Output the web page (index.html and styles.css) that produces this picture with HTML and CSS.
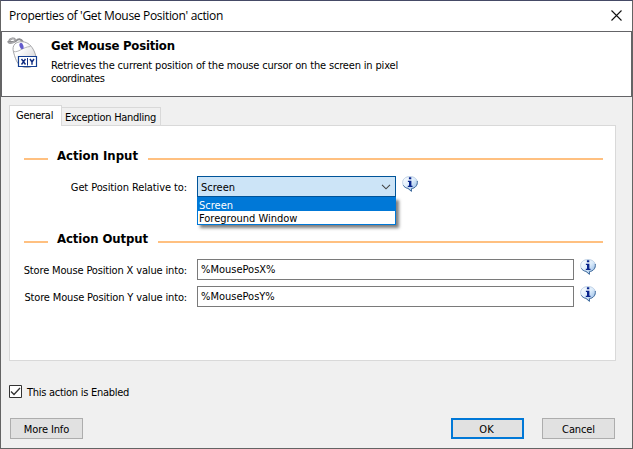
FILE: index.html
```html
<!DOCTYPE html>
<html lang="en">
<head>
<meta charset="utf-8">
<title>Properties of 'Get Mouse Position' action</title>
<link rel="stylesheet" href="styles.css">
</head>
<body>
<svg width="0" height="0" class="defs" aria-hidden="true">
  <defs>
    <linearGradient id="bubble" x1="0" y1="0" x2="1" y2="1">
      <stop offset="0" stop-color="#ffffff"/><stop offset=".5" stop-color="#dcecfb"/><stop offset="1" stop-color="#7fabdf"/>
    </linearGradient>
    <linearGradient id="shell" x1="0" y1="0" x2="1" y2="1">
      <stop offset=".3" stop-color="#ffffff"/><stop offset="1" stop-color="#c9c9cc"/>
    </linearGradient>
    <symbol id="info" viewBox="0 0 16 16">
      <path d="M8 .5C3.7.5.6 3 .6 6.600c0 3 2.200 5.100 5.400 5.800L9.300 15.500V12.600c3.700-.4 6.100-2.800 6.100-6C15.400 3 12.300.5 8 .5Z" fill="url(#bubble)" stroke="#b4c8df" stroke-width=".8"/>
      <path d="M15.300 5c.5 4.200-2.200 7.200-5.800 7.600v2.700L6 12.400C3.800 12 2.200 10.900 1.300 9.300" fill="none" stroke="#456f9f" stroke-width="1"/>
      <path d="M6.900 1.300h2.400v2H6.900zM5.900 4.800h3.500v5h1.100v1.200H5.800V9.800H7V6H5.900z" fill="#08248c"/>
    </symbol>
  </defs>
</svg>
<div class="window">
  <div class="titlebar">
    <span class="title">Properties of 'Get Mouse Position' action</span>
    <svg class="close" width="11" height="11" viewBox="0 0 11 11"><path d="M.5.5l10 10M10.500.5l-10 10" stroke="#111" stroke-width="1.1"/></svg>
  </div>
  <div class="header">
    <svg class="mouse" width="32" height="32" viewBox="0 0 32 32">
      <path d="M2 4C3 1 8 .5 8 3S3 7 1.500 5.200 7 6.500 9 4s5-2.500 7 1" fill="none" stroke="#8b8b8e" stroke-width="1.900"/>
      <path d="M2 4C3 1 8 .5 8 3S3 7 1.500 5.200" fill="none" stroke="#d6d6d8" stroke-width=".6"/>
      <path d="M6.500 15C4.500 8 9 4.500 15 4.700c6 .2 10 4.300 12.500 10.300C31 23 29 30.500 20 30.500 11 30.500 9 24 6.500 15Z" fill="url(#shell)" stroke="#a7a7aa"/>
      <path d="M6.500 14.500c5 1.500 9-4.500 17-5" fill="none" stroke="#b5b5b8"/>
      <ellipse cx="14.500" cy="9" rx="1.900" ry="3.200" transform="rotate(-18 14.500 9)" fill="#625acb"/>
      <path d="M11.500 19.500h18v10h-18z" fill="#fff" stroke="#123d91" stroke-width="1.200"/>
      <path d="M14.500 22l4 5.500M18.500 22l-4 5.500M23 22l2 3 2-3M25 25v2.800" fill="none" stroke="#102d80" stroke-width="1.400"/>
      <path d="M20.500 21v7.500" stroke="#102d80"/>
    </svg>
    <div class="header-text">
      <h1>Get Mouse Position</h1>
      <p><span class="desc-one">Retrieves the current position of the mouse cursor on the screen in pixel</span><br><span class="desc-two">coordinates</span></p>
    </div>
  </div>
  <div class="client">
    <div class="tabs">
      <div class="tab active"><span class="t-general">General</span></div>
      <div class="tab"><span class="t-exception">Exception Handling</span></div>
    </div>
    <div class="panel">
      <div class="section"><h2 class="h-input">Action Input</h2></div>
      <div class="row row-select">
        <label class="l-relative">Get Position Relative to:</label>
        <div class="combo">
          <span>Screen</span>
          <svg width="10" height="6" viewBox="0 0 10 6"><path d="M1 .8l4 4 4-4" fill="none" stroke="#444" stroke-width="1.100"/></svg>
          <div class="menu">
            <div class="option selected">Screen</div>
            <div class="option"><span class="t-foreground">Foreground Window</span></div>
          </div>
        </div>
        <svg class="info" width="16" height="16"><use href="#info"/></svg>
      </div>
      <div class="section second"><h2 class="h-output">Action Output</h2></div>
      <div class="row">
        <label class="l-store">Store Mouse Position X value into:</label>
        <div class="field"><span>%MousePosX%</span></div>
        <svg class="info" width="16" height="16"><use href="#info"/></svg>
      </div>
      <div class="row">
        <label class="l-store">Store Mouse Position Y value into:</label>
        <div class="field"><span>%MousePosY%</span></div>
        <svg class="info" width="16" height="16"><use href="#info"/></svg>
      </div>
    </div>
    <div class="enabled">
      <svg width="13" height="13" viewBox="0 0 13 13"><path d="M.5.5h12v12H.5z" fill="#fff" stroke="#333"/><path d="M2 6.500l3 3 6-6.500" fill="none" stroke="#333" stroke-width="1.300"/></svg>
      <span class="t-enabled">This action is Enabled</span>
    </div>
    <div class="buttons">
      <div class="button more"><span class="t-more">More Info</span></div>
      <div class="button primary"><span>OK</span></div>
      <div class="button"><span class="t-cancel">Cancel</span></div>
    </div>
  </div>
</div>
</body>
</html>
```
FILE: styles.css
```css
* { box-sizing: border-box; }
body { margin: 0; font: 11px/13px "DejaVu Sans Condensed", "DejaVu Sans", sans-serif; font-stretch: condensed; color: #000; }
.defs { position: absolute; }
svg { display: block; flex: none; }
h1, h2, p { margin: 0; }
span, label, h1, h2 { white-space: nowrap; }
.window { width: 633px; height: 449px; border: 1px solid #646464; border-top-color: #454a66; background: #f0f0f0; display: flex; flex-direction: column; overflow: hidden; }
.titlebar { height: 30px; background: #fff; display: flex; justify-content: space-between; padding: 0 10px 0 8px; align-items: center; }
.title { font: 12px/16px "Open Sans", sans-serif; letter-spacing: -.32px; }
.close { margin-bottom: 2px; }
.header { height: 66px; background: #fff; border: 1px solid #646467; display: flex; padding: 5px 0 0 5px; }
.header-text { padding: 1px 0 0 12px; }
h1 { font-size: 13px; line-height: 16px; font-weight: bold; letter-spacing: -.22px; }
p { margin-top: 5px; }
.desc-one { letter-spacing: -.165px; }
.desc-two { letter-spacing: -.4px; }
.t-general, .t-exception, .t-enabled { letter-spacing: -.27px; }
.l-relative { letter-spacing: -.1px; }
.l-store { letter-spacing: -.155px; }
.t-more, .t-cancel { letter-spacing: -.12px; }
.client { flex: 1; padding: 8px 16px 0 8px; display: flex; flex-direction: column; }
.tabs { height: 20px; display: flex; align-items: flex-end; }
.tab { height: 18px; width: 99px; border: 1px solid #d9d9d9; border-left: 0; border-bottom: 0; padding: 3px 0 0 3px; }
.tab.active { height: 21px; width: 53px; margin-bottom: -1px; background: #fff; border-left: 1px solid #d9d9d9; padding: 3px 0 0 6px; position: relative; }
.panel { height: 236px; width: 607px; background: #fff; border: 1px solid #d9d9d9; padding: 21px 11px 0 13px; }
.section { display: flex; height: 18px; align-items: center; width: 579px; margin-left: 1px; }
.section::before, .section::after { content: ""; height: 2px; background: #ffc080; margin-top: 6px; }
.section::before { width: 24px; }
.section::after { flex: 1; }
h2 { font-size: 13px; line-height: 18px; padding-left: 9px; margin-top: -1px; }
.h-input { width: 100px; }
.h-output { width: 110px; letter-spacing: -.08px; }
.row { display: flex; height: 21px; margin-bottom: 6px; }
.row label { width: 164px; text-align: right; padding-top: 5px; margin-right: 10px; }
.row-select { margin-top: 11px; }
.section.second { margin-top: 33px; margin-bottom: 11px; }
.combo { width: 199px; height: 21px; border: 1px solid #005499; background: #cce4f7; position: relative; display: flex; align-items: center; justify-content: space-between; padding: 0 4px 0 3px; }
.combo > span { padding-top: 2px; }
.menu { position: absolute; left: -1px; top: 20px; width: 199px; height: 28px; border: 1px solid #0078d7; background: #fff; box-shadow: 3px 3px 3px rgba(0,0,0,.5); }
.option { height: 13px; padding-left: 1px; line-height: 15px; }
.option.selected { background: #0078d7; color: #fff; }
.field { width: 377px; height: 21px; border: 1px solid #7a7a7a; padding: 3px 0 0 3px; }
.info { margin-left: 6px; }
.enabled { margin-top: 24px; height: 13px; display: flex; gap: 5px; line-height: 15px; }
.buttons { display: flex; margin: 20px 1px 0 1px; }
.button { width: 73px; height: 21px; background: #e1e1e1; border: 1px solid #adadad; display: flex; align-items: center; justify-content: center; }
.button span { padding-top: 2px; }
.button.more { margin-right: auto; }
.button.primary { border: 2px solid #0078d7; margin-right: 18px; }
.button.primary span { margin-right: 2px; }
```
